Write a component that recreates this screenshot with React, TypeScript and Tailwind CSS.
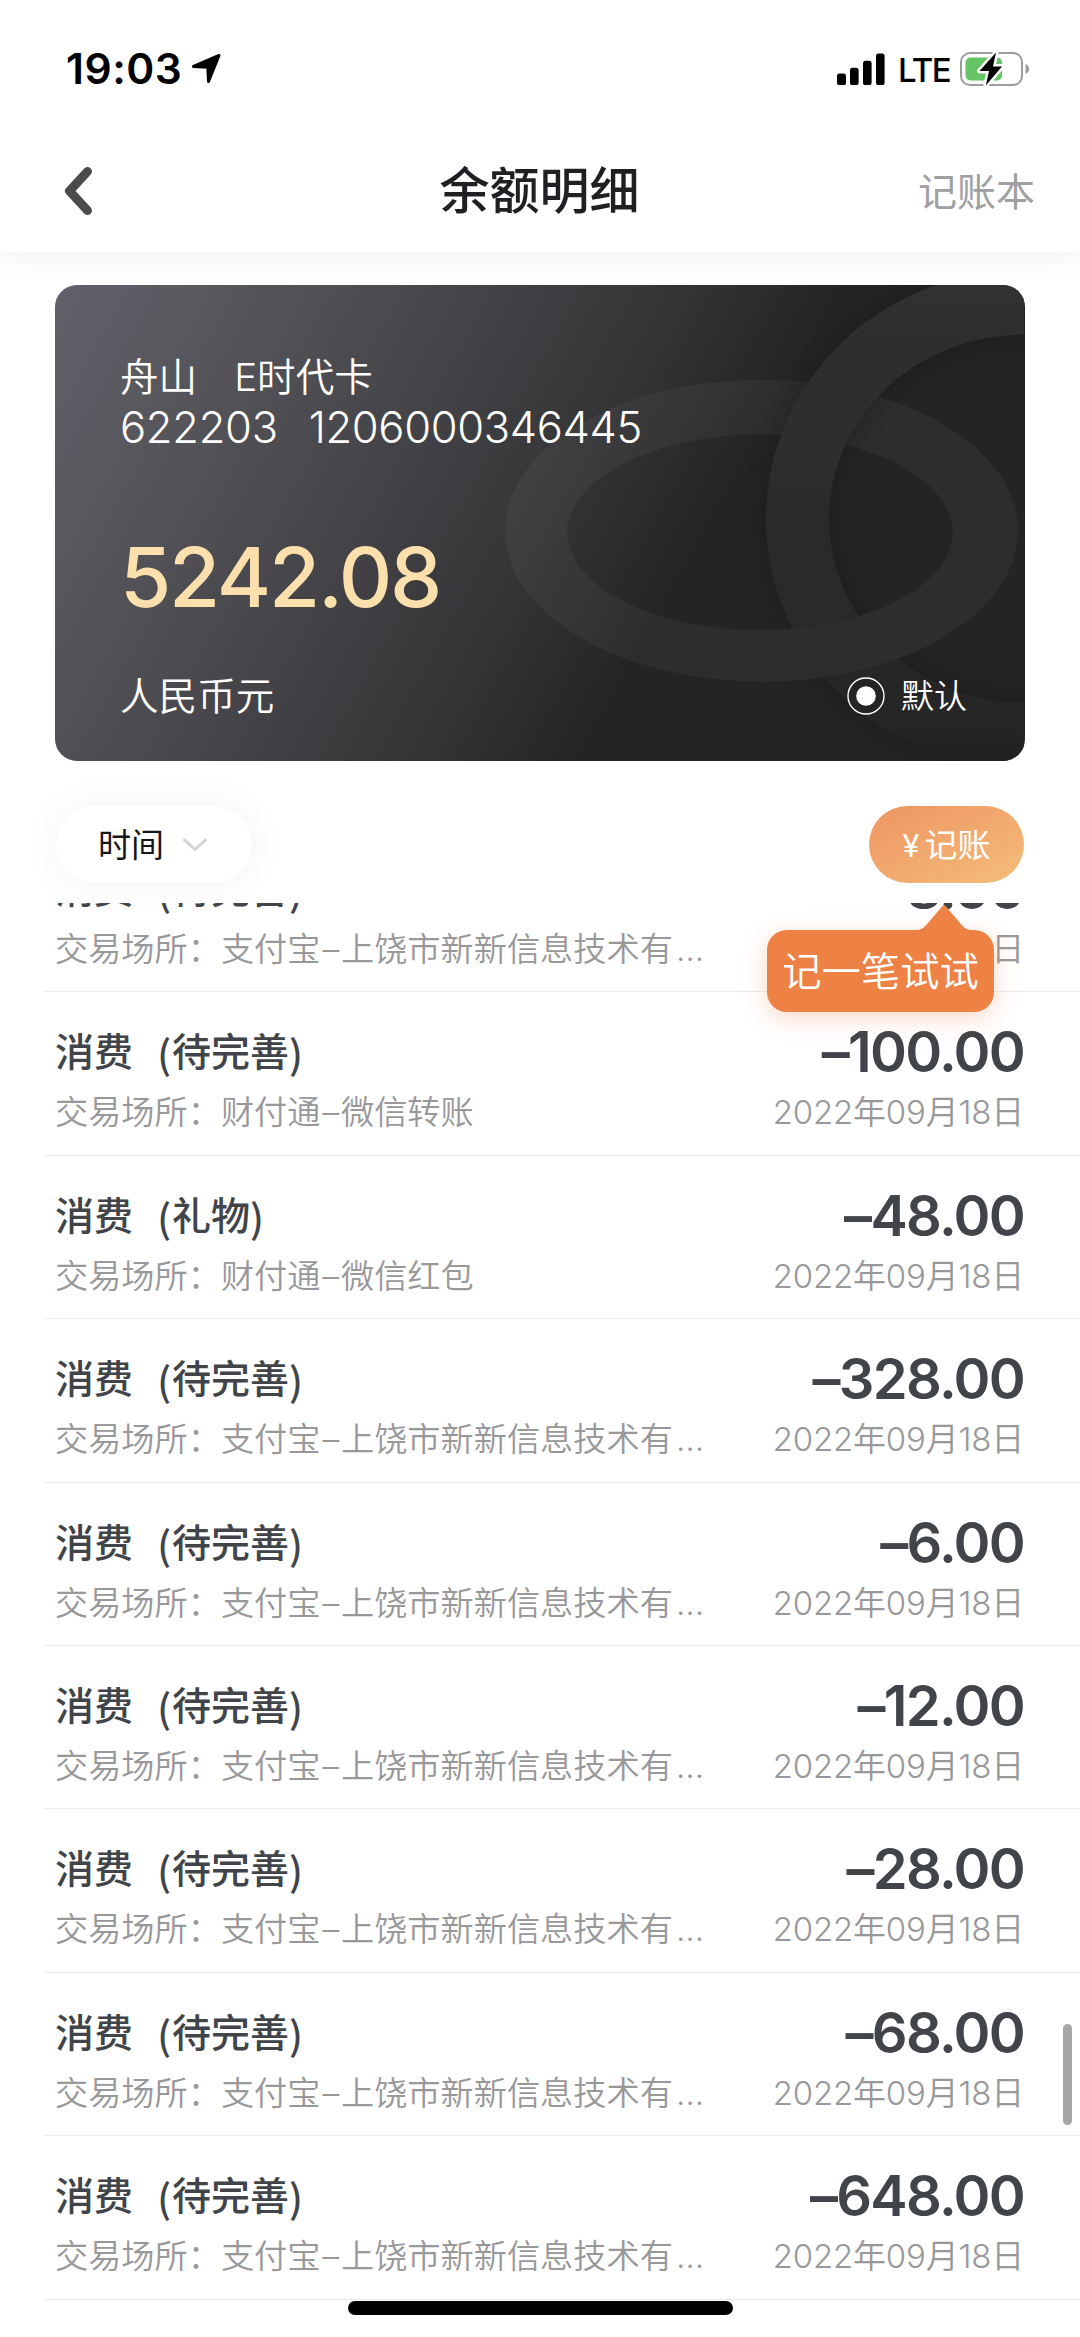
const CJK = "font-['Inter','Noto_Sans_CJK_SC',sans-serif]";

const SHANGRAO = ["支付宝", "上饶市新新信息技术有"];

const records = [
  { type: "待完善", place: SHANGRAO, cut: true, amount: "8.00" },
  { type: "待完善", place: ["财付通", "微信转账"], amount: "100.00" },
  { type: "礼物", place: ["财付通", "微信红包"], amount: "48.00" },
  { type: "待完善", place: SHANGRAO, cut: true, amount: "328.00" },
  { type: "待完善", place: SHANGRAO, cut: true, amount: "6.00" },
  { type: "待完善", place: SHANGRAO, cut: true, amount: "12.00" },
  { type: "待完善", place: SHANGRAO, cut: true, amount: "28.00" },
  { type: "待完善", place: SHANGRAO, cut: true, amount: "68.00" },
  { type: "待完善", place: SHANGRAO, cut: true, amount: "648.00" },
];

function StatusBar() {
  return (
    <div className="flex h-[138px] items-center justify-between pl-[66px] pr-[50px] text-black">
      <div className="flex items-center gap-[9px]">
        <span className="text-[42.500px] font-semibold leading-none tracking-[0.500px]">
          19:03
        </span>
        <svg width="31" height="31" viewBox="0 0 31 31" className="-mt-[2px]">
          <path
            d="M28 2.5 17.5 28.5 16.8 14.2 2.5 13.5Z"
            fill="#000"
            stroke="#000"
            strokeWidth="3"
            strokeLinejoin="round"
          />
        </svg>
      </div>
      <div className="flex items-center">
        <svg width="48" height="32" viewBox="0 0 48 32">
          <rect x="0" y="20.5" width="9" height="11.5" rx="2.6" />
          <rect x="13" y="14.8" width="8.6" height="17.2" rx="2.6" />
          <rect x="26" y="7.8" width="8.6" height="24.2" rx="2.6" />
          <rect x="39" y="0.5" width="8.6" height="31.5" rx="2.6" />
        </svg>
        <span className="ml-[13px] w-[62px] pt-[2px] text-[33px] font-medium leading-none tracking-[-1.700px]">
          LTE
        </span>
        <svg width="70" height="36" viewBox="0 0 70 36">
          <rect
            x="1"
            y="2"
            width="61"
            height="32"
            rx="9"
            fill="none"
            stroke="#9c9c9e"
            strokeWidth="2"
          />
          <path d="M65.5 13c2 .8 3.6 2.6 3.6 5s-1.600 4.200-3.600 5z" fill="#9c9c9e" />
          <rect x="5.500" y="6.500" width="36.500" height="23" rx="5" fill="#64c466" />
          <path
            d="M36 1.500 19.500 20H29L25.800 34.500 42 15.500H33Z"
            fill="#000"
            stroke="#fff"
            strokeWidth="5"
            strokeLinejoin="round"
            paintOrder="stroke"
          />
        </svg>
      </div>
    </div>
  );
}

function NavBar() {
  return (
    <div className="grid h-[114px] grid-cols-3 items-center pb-[9px] pl-[64px] pr-[45px]">
      <svg width="30" height="50" viewBox="0 0 30 50" className="mt-[1px]">
        <path
          d="M23.500 5.500 5.500 25l18 19.500"
          fill="none"
          stroke="#4b4b4b"
          strokeWidth="9"
          strokeLinecap="round"
          strokeLinejoin="round"
        />
      </svg>
      <h1 className="-ml-[20px] whitespace-nowrap text-center text-[50px] font-medium leading-none text-[#1f2023]">
        余额明细
      </h1>
      <span className="pt-[1px] text-right text-[39px] leading-none text-[#a0a0a3]">
        记账本
      </span>
    </div>
  );
}

function CardRings() {
  return (
    <svg
      className="absolute inset-0"
      width="969"
      height="476"
      viewBox="55 285 969 476"
    >
      <defs>
        <filter id="ringShadow" x="-20%" y="-20%" width="140%" height="140%">
          <feDropShadow dx="0" dy="0" stdDeviation="14" floodColor="#000" floodOpacity="0.25" />
        </filter>
        <linearGradient id="ringFade" gradientUnits="userSpaceOnUse" x1="0" y1="285" x2="0" y2="765">
          <stop offset="0" stopColor="#303030" />
          <stop offset="0.700" stopColor="#2a2a2a" />
          <stop offset="1" stopColor="#232323" />
        </linearGradient>
        <clipPath id="lowerCross">
          <path d="M766 600H1018V700H766Z" />
        </clipPath>
        <path
          id="flatRing"
          fillRule="evenodd"
          d="M505 530.700a256.500 151 0 1 0 513 0a256.500 151 0 1 0-513 0ZM567.300 532.300a192.700 97.700 0 1 0 385.400 0a192.700 97.700 0 1 0-385.400 0Z"
        />
      </defs>
      <use href="#flatRing" fill="#fff" fillOpacity="0.045" />
      <path
        fillRule="evenodd"
        fill="url(#ringFade)"
        filter="url(#ringShadow)"
        d="M766 519a258 249 0 1 0 516 0a258 249 0 1 0-516 0ZM829 518.500a195 184 0 1 0 390 0a195 184 0 1 0-390 0Z"
      />
      <use href="#flatRing" fill="#2d2d2d" clipPath="url(#lowerCross)" />
    </svg>
  );
}

function AccountCard() {
  return (
    <section className="relative mx-[55px] mt-[33px] h-[476px] overflow-hidden rounded-[22px] bg-[linear-gradient(119deg,#62616b_0%,#59585e_12%,#414145_38%,#343436_51%,#242424_64%,#242424_100%)] text-white">
      <CardRings />
      <div className="relative flex h-full flex-col pl-[65px] pr-[58px] font-[350]">
        <div className="mt-[64px] flex h-[56px] items-center text-[38.600px] leading-none">
          <span>舟山</span>
          <span className="ml-[37px]">E时代卡</span>
        </div>
        <div className="mt-[3px] flex h-[40px] items-center text-[43.500px] font-light leading-none">
          <span className="tracking-[-0.300px]">622203</span>
          <span className="ml-[31px] tracking-[-0.350px]">1206000346445</span>
        </div>
        <div className="mt-[87px] flex h-[84px] items-center text-[83px] font-medium leading-none tracking-[-2.200px] text-[#fbdfac]">
          5242.08
        </div>
        <div className="mt-[49px] flex h-[56px] items-center justify-between text-[38.600px] leading-none">
          <span>人民币元</span>
          <div className="flex items-center gap-[16px] text-[33px]">
            <svg width="38" height="38" viewBox="0 0 38 38">
              <circle cx="19" cy="19" r="18" fill="#242424" stroke="#fff" strokeWidth="1.400" />
              <circle cx="19" cy="19" r="9.800" fill="#fff" />
            </svg>
            默认
          </div>
        </div>
      </div>
    </section>
  );
}

function Toolbar() {
  return (
    <div className="mt-[45px] flex h-[77px] items-center justify-between px-[56px] text-[33px] leading-none">
      <button className="flex h-full w-[196px] items-center rounded-full bg-white pl-[42px] pt-[1px] text-[#151515] shadow-[0_0_40px_rgba(0,0,0,0.06)]">
        时间
        <svg width="26" height="16" viewBox="0 0 26 16" className="ml-[18px]">
          <path d="M1.500 2 13 12.500 24.500 2" fill="none" stroke="#d5d5d5" strokeWidth="3" />
        </svg>
      </button>
      <button className="flex h-full w-[155px] items-center justify-center gap-[5px] rounded-full bg-linear-to-br from-[#ee9461] to-[#f3bd7b] pt-[1px] text-white">
        <span className="text-[31px]">¥</span>记账
      </button>
    </div>
  );
}

function RecordRow({ type, place, cut, amount }: (typeof records)[number]) {
  return (
    <li className="ml-[44px] flex h-[163.400px] justify-between border-b border-[#ececec] pl-[11px] pr-[56px] pt-[32px]">
      <div>
        <h2 className="flex h-[56px] text-[39px] font-medium leading-[56px] text-[#414449]">
          消费
          <span className="w-[39px] pr-[1px] text-right font-['Noto_Sans_CJK_SC']">(</span>
          {type}
          <span className="font-['Noto_Sans_CJK_SC']">)</span>
        </h2>
        <p className="mt-[10px] flex h-[44px] whitespace-nowrap text-[33.200px] font-[350] leading-[44px] text-[#98989a]">
          交易场所：{place[0]}
          <span className="w-[20.500px] text-center">–</span>
          {place[1]}
          {cut && <span className="ml-[3px]">…</span>}
        </p>
      </div>
      <div className="flex flex-col items-end">
        <strong className="h-[56px] text-[56px] font-semibold leading-[56px] tracking-[-1.700px] text-[#414449]">
          –{amount}
        </strong>
        <time className="mt-[10px] h-[44px] whitespace-nowrap text-[33px] font-[350] leading-[44px] tracking-[-0.200px] text-[#98989a]">
          2022年09月18日
        </time>
      </div>
    </li>
  );
}

function TryTooltip() {
  return (
    <div className="absolute left-[767px] top-[930px] flex h-[82px] w-[227px] items-center justify-center rounded-[20px] bg-[#ee8144] pt-[2px] text-[39.300px] font-[350] leading-none text-white shadow-[0_6px_24px_rgba(238,129,68,0.300)]">
      <svg
        className="absolute -top-[25px] left-[147px]"
        width="60"
        height="26"
        viewBox="0 0 60 26"
      >
        <path
          d="M0 26C7 25 10 23 14 18L28 1.500Q30 -1 32 1.500L46 18C50 23 53 25 60 26Z"
          fill="#ee8144"
        />
      </svg>
      记一笔试试
    </div>
  );
}

export default function App() {
  return (
    <div className={`relative flex h-[2337px] w-[1080px] flex-col overflow-hidden bg-white ${CJK}`}>
      <header className="relative bg-white shadow-[0_6px_28px_rgba(0,0,0,0.060)]">
        <StatusBar />
        <NavBar />
      </header>
      <AccountCard />
      <Toolbar />
      <div className="relative mt-[20px] min-h-0 flex-1 overflow-hidden">
        <ul className="-mt-[74px]">
          {records.map((record, i) => (
            <RecordRow key={i} {...record} />
          ))}
        </ul>
      </div>
      <TryTooltip />
      <div className="absolute left-[1063px] top-[2024px] h-[101px] w-[9px] rounded-full bg-[#a6a6a6]" />
      <div className="absolute left-[348px] top-[2301px] h-[14px] w-[385px] rounded-full bg-black" />
    </div>
  );
}
